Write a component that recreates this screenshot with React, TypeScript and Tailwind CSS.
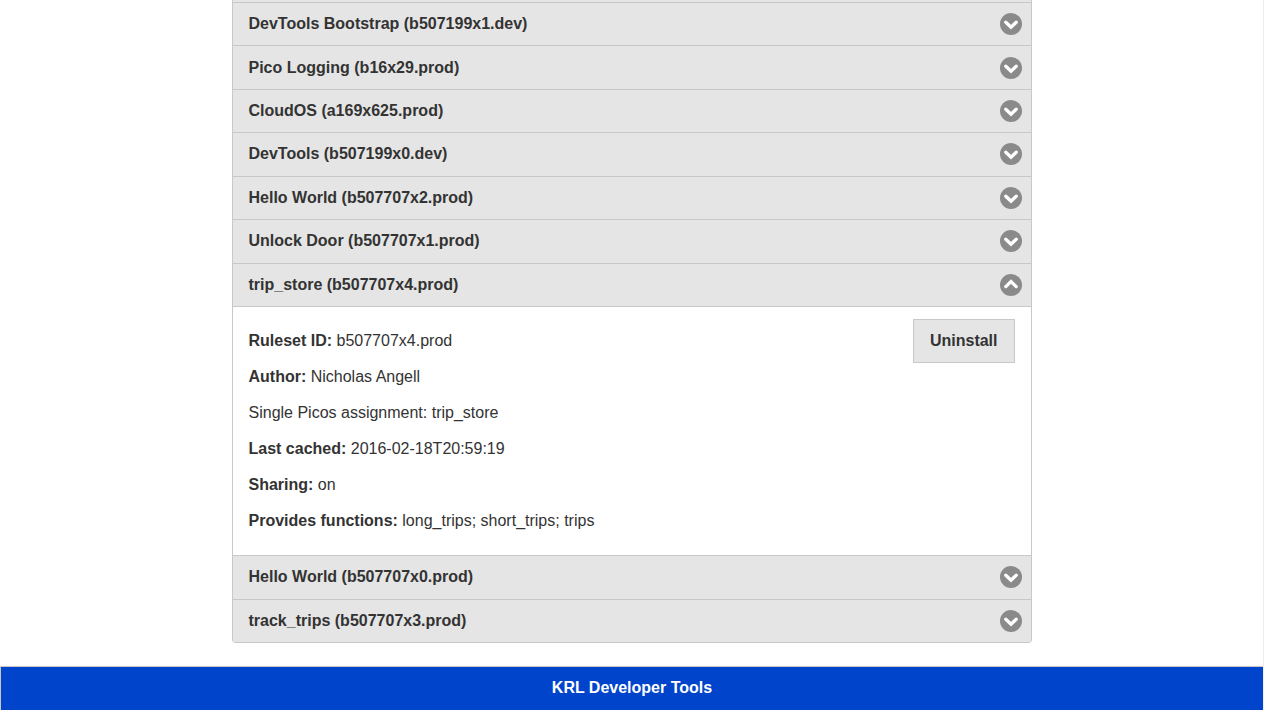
import { useState } from "react";

type Ruleset = { name: string; rid: string };

const before: Ruleset[] = [
  { name: "DevTools Bootstrap", rid: "b507199x1.dev" },
  { name: "Pico Logging", rid: "b16x29.prod" },
  { name: "CloudOS", rid: "a169x625.prod" },
  { name: "DevTools", rid: "b507199x0.dev" },
  { name: "Hello World", rid: "b507707x2.prod" },
  { name: "Unlock Door", rid: "b507707x1.prod" },
];
const current: Ruleset = { name: "trip_store", rid: "b507707x4.prod" };
const after: Ruleset[] = [
  { name: "Hello World", rid: "b507707x0.prod" },
  { name: "track_trips", rid: "b507707x3.prod" },
];

function Caret({ open }: { open: boolean }) {
  return (
    <svg viewBox="0 0 22 22" className="h-[22px] w-[22px] shrink-0" aria-hidden="true">
      <circle cx="11" cy="11" r="11" fill="#8a8a8a" />
      <path
        d={open ? "M5.8 12.6 L11 7.6 L16.2 12.6" : "M5.8 9.2 L11 14.2 L16.2 9.2"}
        fill="none"
        stroke="#fff"
        strokeWidth="3.3"
        strokeLinecap="round"
      />
    </svg>
  );
}

function Heading({ item, open = false, onClick }: { item: Ruleset; open?: boolean; onClick?: () => void }) {
  return (
    <h4 className="flex">
      <button
        type="button"
        aria-expanded={open}
        onClick={onClick}
        className="flex w-full cursor-pointer items-center justify-between border-t border-[#c8c8c8] bg-[#e5e5e5] pr-[9px] pl-4 text-left"
      >
        <span className="leading-5 font-bold">
          {item.name} ({item.rid})
        </span>
        <Caret open={open} />
      </button>
    </h4>
  );
}

export default function App() {
  const [open, setOpen] = useState(true);
  return (
    <div className="flex min-h-screen flex-col border-r border-[#eeeeee] bg-white font-['Liberation_Sans',Arial,sans-serif] text-base text-[#333333]">
      <main className="mx-auto mb-[23px] w-full max-w-[800px]">
        <div className="overflow-hidden rounded-b border-x border-b border-[#c8c8c8]">
          <div className="h-0.5 bg-[#e5e5e5]" />
          <div className="grid min-h-[304px] auto-rows-fr">
            {before.map((item) => (
              <Heading key={item.rid} item={item} />
            ))}
            <Heading item={current} open={open} onClick={() => setOpen(!open)} />
          </div>
          {open && (
            <section className="flex items-start justify-between border-t border-[#c8c8c8] pt-3 pr-4 pb-6 pl-4">
              <div className="flex flex-col gap-4 pt-3 leading-5">
                <p>
                  <strong>Ruleset ID:</strong> b507707x4.prod
                </p>
                <p>
                  <strong>Author:</strong> Nicholas Angell
                </p>
                <p>Single Picos assignment: trip_store</p>
                <p>
                  <strong>Last cached:</strong> 2016-02-18T20:59:19
                </p>
                <p>
                  <strong>Sharing:</strong> on
                </p>
                <p>
                  <strong>Provides functions:</strong> long_trips; short_trips; trips
                </p>
              </div>
              <button
                type="button"
                className="h-11 cursor-pointer border border-[#c8c8c8] bg-[#e5e5e5] px-4 leading-5 font-bold"
              >
                Uninstall
              </button>
            </section>
          )}
          <div className="grid min-h-[87px] auto-rows-fr">
            {after.map((item) => (
              <Heading key={item.rid} item={item} />
            ))}
          </div>
        </div>
      </main>
      <footer className="border-t border-l border-[#c8c8c8] bg-[#0044cc] pt-[11px] pb-3 text-center text-white">
        <h1 className="leading-5 font-bold">KRL Developer Tools</h1>
      </footer>
    </div>
  );
}
